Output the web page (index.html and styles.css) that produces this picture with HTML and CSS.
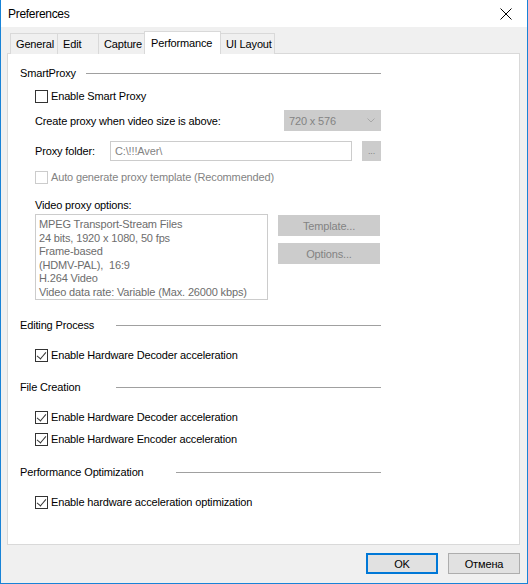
FILE: index.html
```html
<!DOCTYPE html>
<html lang="en">
<head>
    <meta charset="UTF-8">
    <title>Preferences</title>
    <link rel="stylesheet" href="styles.css">
</head>
<body>
    <div class="window">
        <div class="titlebar">
            <span class="title">Preferences</span>
            <svg class="close" viewBox="0 0 12 12" width="12" height="12">
                <path d="M0.5 0.5L11.5 11.5M11.5 0.5L0.5 11.5" stroke="#000" stroke-width="1"></path>
            </svg>
        </div>

        <div class="client">
            <div class="tabs">
                <div class="tab">General</div>
                <div class="tab">Edit</div>
                <div class="tab">Capture</div>
                <div class="tab active">Performance</div>
                <div class="tab">UI Layout</div>
            </div>

            <div class="panel">
                <div class="group-head">
                    <span class="group-label w-smart">SmartProxy</span>
                    <span class="group-line"></span>
                </div>

                <label class="check row-enable">
                    <span class="box"></span>
                    <span>Enable Smart Proxy</span>
                </label>

                <div class="field row-size">
                    <span class="field-label">Create proxy when video size is above:</span>
                    <div class="combo">
                        <span>720 x 576</span>
                        <svg viewBox="0 0 8 5" width="8" height="5">
                            <path d="M0.5 0.5L4 4L7.5 0.5" fill="none" stroke="#a8a8a8" stroke-width="1"></path>
                        </svg>
                    </div>
                </div>

                <div class="field row-folder">
                    <span class="field-label folder-label">Proxy folder:</span>
                    <div class="textbox">C:\!!!Aver\</div>
                    <div class="btn-disabled browse">...</div>
                </div>

                <label class="check disabled row-auto">
                    <span class="box"></span>
                    <span>Auto generate proxy template (Recommended)</span>
                </label>

                <div class="plain-label row-options">Video proxy options:</div>

                <div class="options">
                    <div class="listbox">
                        <div>MPEG Transport-Stream Files</div>
                        <div>24 bits, 1920 x 1080, 50 fps</div>
                        <div>Frame-based</div>
                        <div>(HDMV-PAL),&nbsp; 16:9</div>
                        <div>H.264 Video</div>
                        <div>Video data rate: Variable (Max. 26000 kbps)</div>
                    </div>
                    <div class="side-buttons">
                        <div class="btn-disabled">Template...</div>
                        <div class="btn-disabled">Options...</div>
                    </div>
                </div>

                <div class="group-head head-editing">
                    <span class="group-label w-editing">Editing Process</span>
                    <span class="group-line"></span>
                </div>

                <label class="check checked row-first">
                    <span class="box"></span>
                    <span>Enable Hardware Decoder acceleration</span>
                </label>

                <div class="group-head head-file">
                    <span class="group-label w-editing">File Creation</span>
                    <span class="group-line"></span>
                </div>

                <label class="check checked row-first">
                    <span class="box"></span>
                    <span>Enable Hardware Decoder acceleration</span>
                </label>
                <label class="check checked row-next">
                    <span class="box"></span>
                    <span>Enable Hardware Encoder acceleration</span>
                </label>

                <div class="group-head head-perf">
                    <span class="group-label w-perf">Performance Optimization</span>
                    <span class="group-line"></span>
                </div>

                <label class="check checked row-first">
                    <span class="box"></span>
                    <span>Enable hardware acceleration optimization</span>
                </label>
            </div>

            <div class="dialog-buttons">
                <button class="btn btn-default">OK</button>
                <button class="btn">Отмена</button>
            </div>
        </div>
    </div>
</body>
</html>
```

FILE: styles.css
```css
* {
    margin: 0;
    padding: 0;
    box-sizing: border-box;
}

body {
    width: 528px;
    height: 584px;
    font-family: "Liberation Sans", Arial, sans-serif;
    font-size: 11px;
    letter-spacing: -0.15px;
    color: #000;
    background: #f0f0f0;
}

.window {
    width: 528px;
    height: 584px;
    border: 1px solid #1883d7;
    border-top: none;
    background: #f0f0f0;
    display: flex;
    flex-direction: column;
}

.titlebar {
    height: 27px;
    background: white;
    display: flex;
    align-items: center;
    justify-content: space-between;
    padding: 1px 15px 0 7px;
    flex-shrink: 0;
}

.title {
    font-size: 12px;
    letter-spacing: -0.3px;
}

.close {
    display: block;
}

.client {
    padding: 5px 7px 0 6px;
    display: flex;
    flex-direction: column;
}

/* tabs */

.tabs {
    display: flex;
    align-items: flex-end;
    height: 22px;
    padding-left: 3px;
    position: relative;
    z-index: 1;
    margin-bottom: -1px;
}

.tab {
    height: 21px;
    padding: 0 5px;
    display: flex;
    align-items: center;
    white-space: nowrap;
    border: 1px solid #d9d9d9;
    border-right: none;
    border-bottom: none;
    background: #f0f0f0;
}

.tab:nth-child(1) { width: 47px; }
.tab:nth-child(2) { width: 41px; }
.tab:nth-child(3) { width: 48px; }
.tab:nth-child(5) { width: 56px; border-right: 1px solid #d9d9d9; }

.tab.active {
    width: 77px;
    height: 23px;
    margin: 0 -2px;
    padding: 0 6px 1px;
    background: white;
    border: 1px solid #d9d9d9;
    border-bottom: none;
    position: relative;
    z-index: 2;
}

.tab.active + .tab {
    border-left: none;
    padding-left: 7px;
}

.panel {
    height: 492px;
    background: white;
    border: 1px solid #d9d9d9;
    padding: 11px 0 0 12px;
    display: flex;
    flex-direction: column;
}

/* group headers */

.group-head {
    display: flex;
    align-items: center;
    width: 361px;
    height: 16px;
    flex-shrink: 0;
}

.group-label {
    flex-shrink: 0;
}

.w-smart { width: 66px; }
.w-editing { width: 96px; }
.w-perf { width: 156px; }

.group-line {
    flex: 1;
    height: 1px;
    background: #a0a0a0;
}

.head-editing { margin-top: 17px; }
.head-file { margin-top: 14px; }
.head-perf { margin-top: 15px; }

/* checkboxes */

.check {
    display: flex;
    align-items: center;
    gap: 3px;
    height: 20px;
    margin-left: 15px;
    flex-shrink: 0;
}

.box {
    width: 13px;
    height: 13px;
    border: 1px solid #333;
    background: white;
    position: relative;
}

.check.disabled {
    color: #838383;
}

.check.disabled .box {
    border-color: #cccccc;
}

.check.checked .box::after {
    content: "";
    position: absolute;
    left: 3px;
    top: 0px;
    width: 4px;
    height: 8px;
    border-right: 1px solid #333;
    border-bottom: 1px solid #333;
    transform: rotate(40deg);
}

.row-enable { margin-top: 5px; }
.row-auto { margin-top: 6px; }
.row-first { margin-top: 12px; }
.row-next { margin-top: 2px; }

/* fields */

.field {
    display: flex;
    align-items: center;
    margin-left: 15px;
    width: 346px;
    flex-shrink: 0;
}

.row-size {
    margin-top: 4px;
    height: 21px;
    justify-content: space-between;
}

.row-folder {
    margin-top: 10px;
    height: 20px;
}

.folder-label {
    width: 75px;
}

.combo {
    width: 97px;
    height: 21px;
    background: #cccccc;
    color: #838383;
    display: flex;
    align-items: center;
    justify-content: space-between;
    padding: 0 6px 0 5px;
}

.textbox {
    width: 242px;
    height: 20px;
    border: 1px solid #cccccc;
    color: #838383;
    padding: 0 0 0 4px;
    display: flex;
    align-items: center;
}

.btn-disabled {
    background: #cccccc;
    color: #838383;
    display: flex;
    align-items: center;
    justify-content: center;
}

.browse {
    width: 19px;
    height: 20px;
    margin-left: 10px;
    font-size: 9px;
}

.plain-label {
    margin-left: 15px;
    height: 16px;
    line-height: 16px;
    flex-shrink: 0;
}

.row-options { margin-top: 10px; }

.options {
    display: flex;
    margin: 1px 0 0 15px;
    gap: 10px;
    flex-shrink: 0;
}

.listbox {
    width: 233px;
    height: 86px;
    border: 1px solid #cccccc;
    color: #6d6d6d;
    padding: 3px 0 0 3px;
    line-height: 13.5px;
}

.side-buttons {
    display: flex;
    flex-direction: column;
    gap: 7px;
    padding-top: 1px;
}

.side-buttons .btn-disabled {
    width: 102px;
    height: 21px;
}

/* dialog buttons */

.dialog-buttons {
    display: flex;
    justify-content: flex-end;
    gap: 10px;
    margin-top: 8px;
}

.btn {
    width: 72px;
    height: 21px;
    font-family: inherit;
    font-size: 11px;
    letter-spacing: -0.15px;
    background: #e1e1e1;
    border: 1px solid #adadad;
    color: #000;
}

.btn-default {
    border: 2px solid #0078d7;
}
```
